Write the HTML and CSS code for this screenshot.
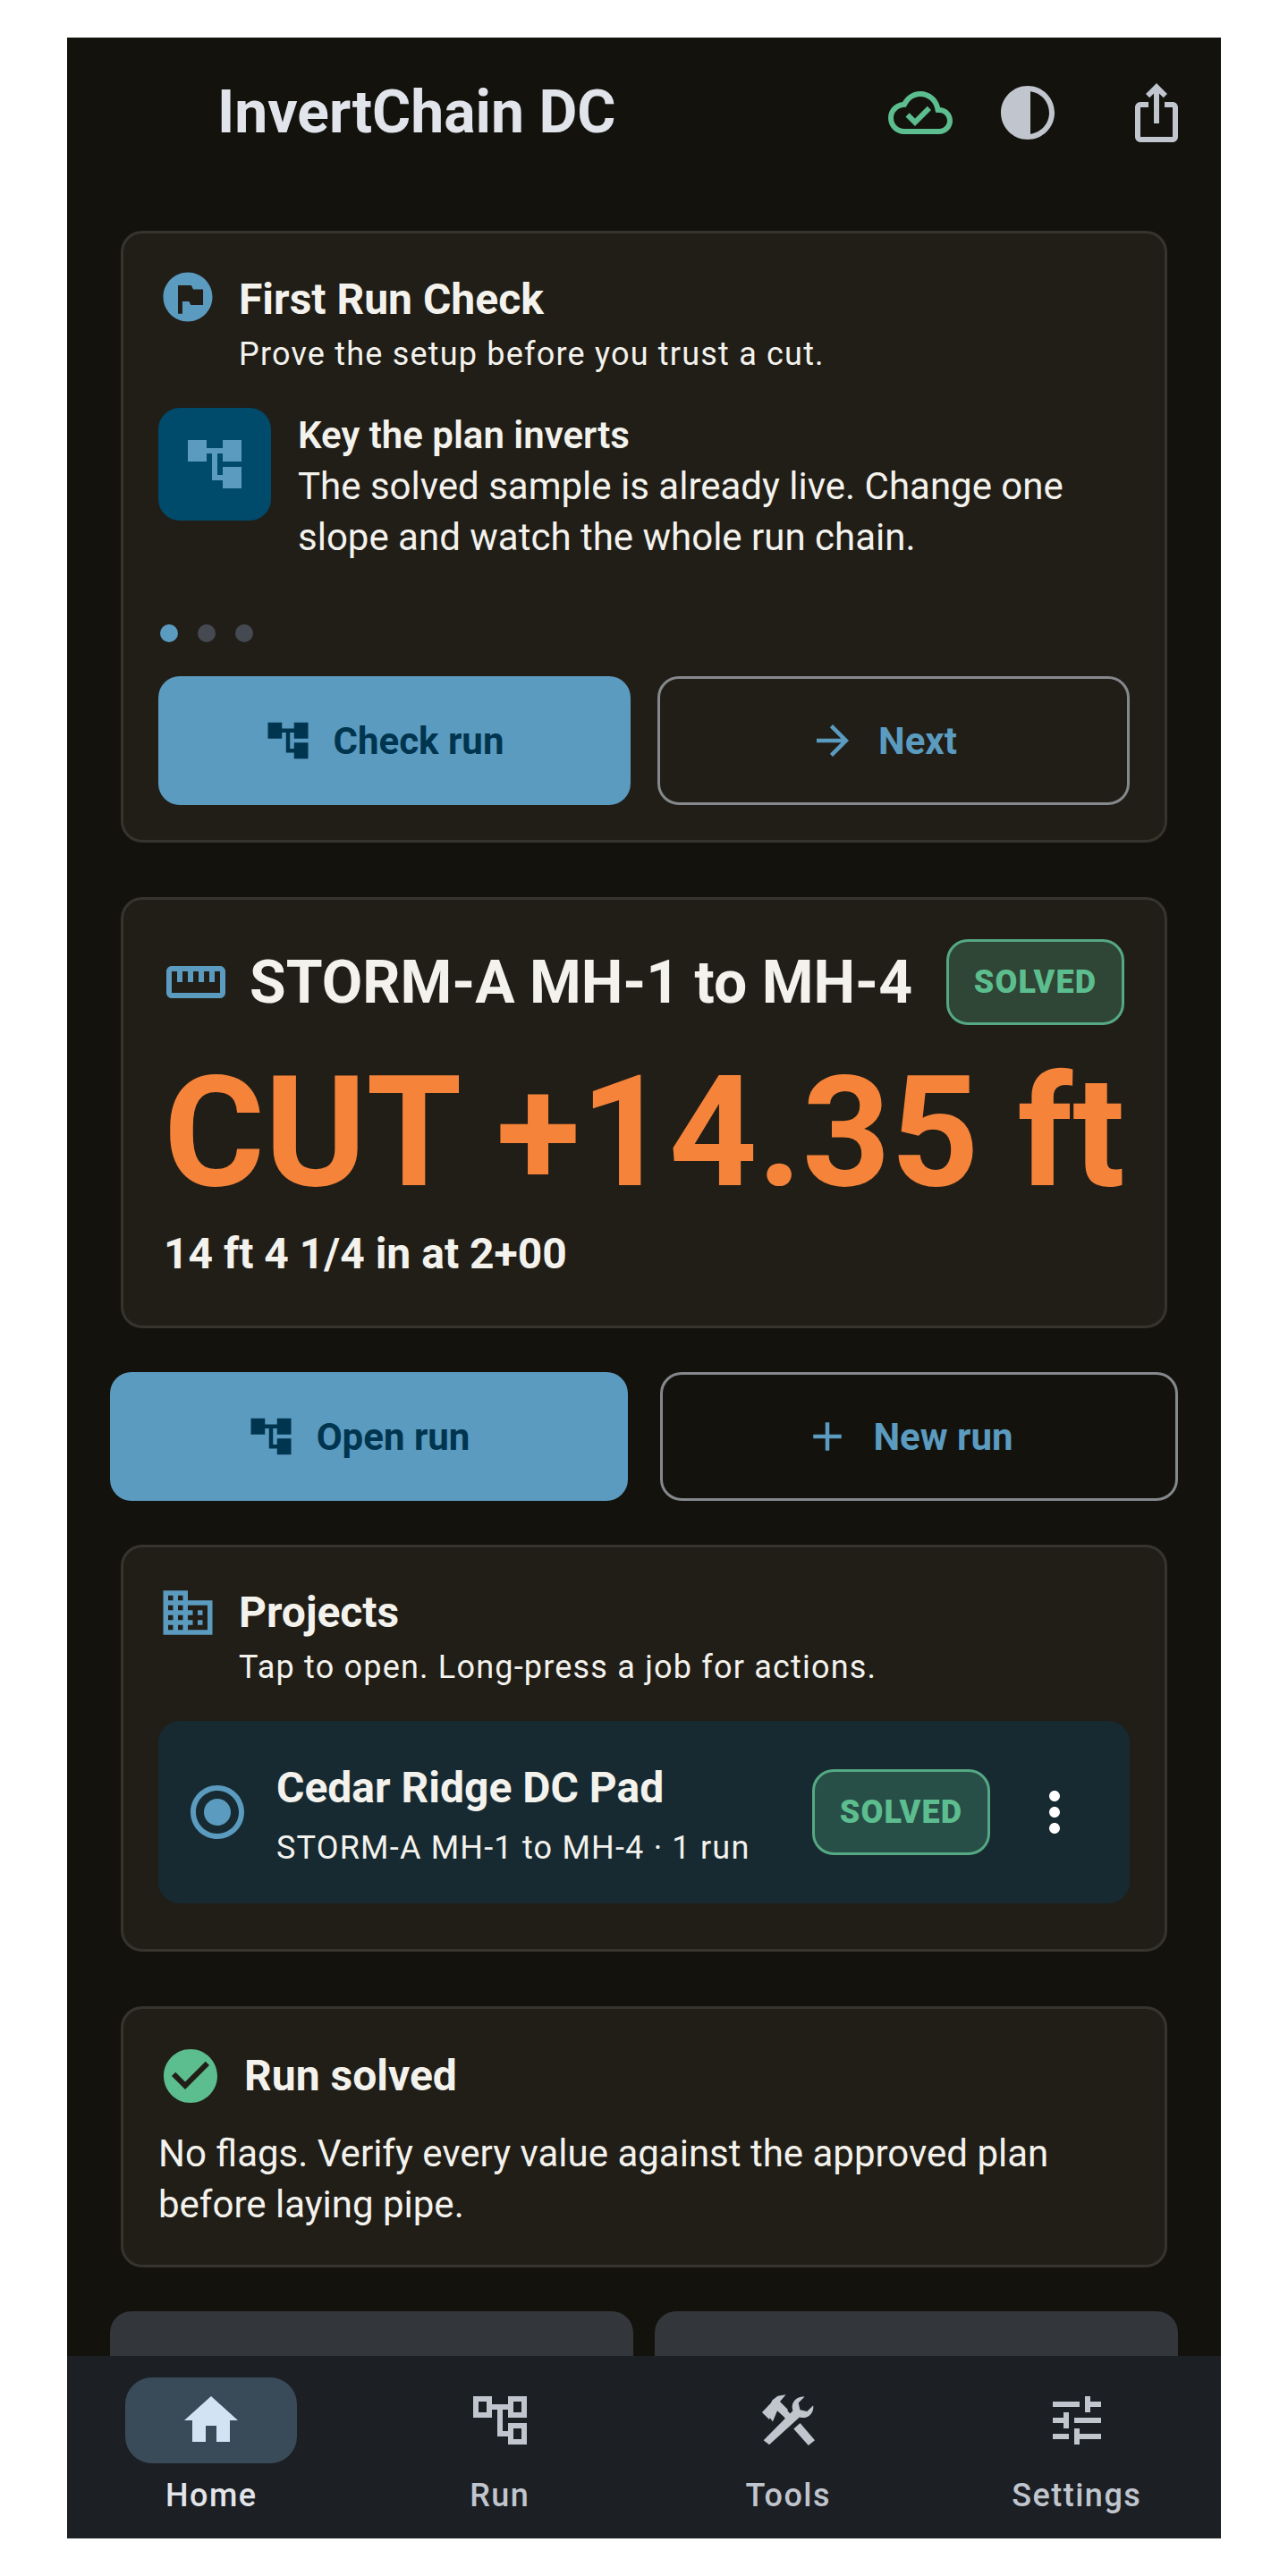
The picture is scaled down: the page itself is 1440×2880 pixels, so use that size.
FILE: index.html
```html
<!DOCTYPE html>
<html lang="en">
<head>
    <meta charset="UTF-8">
    <meta name="viewport" content="width=device-width, initial-scale=1.0">
    <title>InvertChain DC</title>
    <link rel="stylesheet" href="styles.css">
</head>
<body>
    <div class="phone">
        <header class="app-bar">
            <h1 class="app-title">InvertChain DC</h1>
            <svg class="icon i72 green" viewBox="0 0 24 24"><path d="M19.35 10.04C18.67 6.59 15.64 4 12 4 9.11 4 6.6 5.64 5.35 8.04 2.34 8.36 0 10.91 0 14c0 3.31 2.69 6 6 6h13c2.76 0 5-2.24 5-5 0-2.64-2.05-4.78-4.65-4.96zM19 18H6c-2.21 0-4-1.79-4-4 0-2.05 1.53-3.76 3.56-3.97l1.07-.11.5-.95C8.08 7.14 9.94 6 12 6c2.62 0 4.88 1.86 5.39 4.43l.3 1.5 1.53.11c1.56.1 2.78 1.41 2.78 2.96 0 1.65-1.35 3-3 3zm-9-3.82l-2.09-2.09L6.5 13.5 10 17l6.01-6.01-1.41-1.41z"/></svg>
            <svg class="icon i72 grey bar-theme" viewBox="0 0 24 24"><path d="M12 22c5.52 0 10-4.48 10-10S17.52 2 12 2 2 6.48 2 12s4.48 10 10 10zm1-17.93c3.94.49 7 3.85 7 7.93s-3.05 7.44-7 7.93V4.07z"/></svg>
            <svg class="icon i72 grey" viewBox="0 0 24 24"><path d="M16 5l-1.42 1.42-1.59-1.59V16h-1.98V4.83L9.42 6.42 8 5l4-4 4 4zm4 5v11c0 1.1-.9 2-2 2H6c-1.11 0-2-.9-2-2V10c0-1.11.89-2 2-2h3v2H6v11h12V10h-3V8h3c1.1 0 2 .89 2 2z"/></svg>
        </header>

        <main class="content">
            <section class="card card-first">
                <div class="card-head">
                    <svg class="icon i66 blue flag" viewBox="0 0 24 24"><path fill-rule="evenodd" d="M12 2C6.48 2 2 6.48 2 12s4.48 10 10 10 10-4.48 10-10S17.52 2 12 2zM8 7.3h5.4l.8 1.6h4v6.4h-5l-.7-1.5H9.8v5H8z"/></svg>
                    <div>
                        <h2 class="card-title">First Run Check</h2>
                        <p class="card-sub">Prove the setup before you trust a cut.</p>
                    </div>
                </div>
                <div class="slide">
                    <div class="slide-icon">
                        <svg class="icon i72 blue" viewBox="0 0 24 24"><path d="M22 11V3h-7v3H9V3H2v8h7V8h2v10h4v3h7v-8h-7v3h-2V8h2v3z"/></svg>
                    </div>
                    <div class="slide-text">
                        <strong>Key the plan inverts</strong><br>
                        The solved sample is already live. Change one slope and watch the whole run chain.
                    </div>
                </div>
                <div class="dots">
                    <span class="dot on"></span>
                    <span class="dot"></span>
                    <span class="dot"></span>
                </div>
                <div class="btn-row">
                    <a class="btn btn-fill">
                        <svg class="icon i54" viewBox="0 0 24 24"><path d="M22 11V3h-7v3H9V3H2v8h7V8h2v10h4v3h7v-8h-7v3h-2V8h2v3z"/></svg>
                        Check run
                    </a>
                    <a class="btn btn-line">
                        <svg class="icon i54" viewBox="0 0 24 24"><path d="M12 4l-1.41 1.41L16.17 11H4v2h12.17l-5.58 5.59L12 20l8-8z"/></svg>
                        Next
                    </a>
                </div>
            </section>

            <section class="card card-result">
                <div class="result-head">
                    <svg class="icon i72 blue" viewBox="0 0 24 24"><path d="M21 6H3c-1.1 0-2 .9-2 2v8c0 1.1.9 2 2 2h18c1.1 0 2-.9 2-2V8c0-1.1-.9-2-2-2zm0 10H3V8h2v4h2V8h2v4h2V8h2v4h2V8h2v4h2V8h2v8z"/></svg>
                    <h2 class="result-title">STORM-A MH-1 to MH-4</h2>
                    <span class="badge">SOLVED</span>
                </div>
                <div class="result-value">CUT +14.35 ft</div>
                <div class="result-note">14 ft 4 1/4 in at 2+00</div>
            </section>

            <div class="btn-row main-actions">
                <a class="btn btn-fill">
                    <svg class="icon i54" viewBox="0 0 24 24"><path d="M22 11V3h-7v3H9V3H2v8h7V8h2v10h4v3h7v-8h-7v3h-2V8h2v3z"/></svg>
                    Open run
                </a>
                <a class="btn btn-line">
                    <svg class="icon i54" viewBox="0 0 24 24"><path d="M19 13h-6v6h-2v-6H5v-2h6V5h2v6h6v2z"/></svg>
                    New run
                </a>
            </div>

            <section class="card card-projects">
                <div class="card-head">
                    <svg class="icon i66 blue" viewBox="0 0 24 24"><path d="M12 7V3H2v18h20V7H12zM6 19H4v-2h2v2zm0-4H4v-2h2v2zm0-4H4V9h2v2zm0-4H4V5h2v2zm4 12H8v-2h2v2zm0-4H8v-2h2v2zm0-4H8V9h2v2zm0-4H8V5h2v2zm10 12h-8v-2h2v-2h-2v-2h2v-2h-2V9h8v10zm-2-8h-2v2h2v-2zm0 4h-2v2h2v-2z"/></svg>
                    <div>
                        <h2 class="card-title">Projects</h2>
                        <p class="card-sub">Tap to open. Long-press a job for actions.</p>
                    </div>
                </div>
                <div class="job">
                    <svg class="icon i72 blue" viewBox="0 0 24 24"><path d="M12 7c-2.76 0-5 2.24-5 5s2.24 5 5 5 5-2.24 5-5-2.24-5-5-5zm0-5C6.48 2 2 6.48 2 12s4.48 10 10 10 10-4.48 10-10S17.52 2 12 2zm0 18c-4.42 0-8-3.58-8-8s3.58-8 8-8 8 3.58 8 8-3.58 8-8 8z"/></svg>
                    <div class="job-text">
                        <div class="job-name">Cedar Ridge DC Pad</div>
                        <div class="job-sub">STORM-A MH-1 to MH-4 · 1 run</div>
                    </div>
                    <span class="badge">SOLVED</span>
                    <svg class="icon i72 white" viewBox="0 0 24 24"><path d="M12 8c1.1 0 2-.9 2-2s-.9-2-2-2-2 .9-2 2 .9 2 2 2zm0 2c-1.1 0-2 .9-2 2s.9 2 2 2 2-.9 2-2-.9-2-2-2zm0 6c-1.1 0-2 .9-2 2s.9 2 2 2 2-.9 2-2-.9-2-2-2z"/></svg>
                </div>
            </section>

            <section class="card card-status">
                <div class="status-head">
                    <svg class="icon i72 green" viewBox="0 0 24 24"><path d="M12 2C6.48 2 2 6.48 2 12s4.48 10 10 10 10-4.48 10-10S17.52 2 12 2zm-2 15l-5-5 1.41-1.41L10 14.17l7.59-7.59L19 8l-9 9z"/></svg>
                    <h2 class="card-title">Run solved</h2>
                </div>
                <p class="status-text">No flags. Verify every value against the approved plan before laying pipe.</p>
            </section>

            <div class="tiles">
                <div class="tile"></div>
                <div class="tile"></div>
            </div>
        </main>

        <nav class="nav">
            <div class="nav-item active">
                <span class="nav-pill">
                    <svg class="icon i72" viewBox="0 0 24 24"><path d="M10 20v-6h4v6h5v-8h3L12 3 2 12h3v8z"/></svg>
                </span>
                <span class="nav-label">Home</span>
            </div>
            <div class="nav-item">
                <span class="nav-pill">
                    <svg class="icon i72" viewBox="0 0 24 24"><path d="M22 11V3h-7v3H9V3H2v8h7V8h2v10h4v3h7v-8h-7v3h-2V8h2v3h7zM7 9H4V5h3v4zm10 6h3v4h-3v-4zm0-10h3v4h-3V5z"/></svg>
                </span>
                <span class="nav-label">Run</span>
            </div>
            <div class="nav-item">
                <span class="nav-pill">
                    <svg class="icon i72" viewBox="0 0 24 24"><path d="M2.3 9l3.3-3.4.6-1.2 2-1.5 3-.5-2.2 2.6 3 3-1.8 2.4-2.2-2-1.7 4.1-1-1.4-.3.6z"/><path d="M8.6 8.4l1.7-1.7 3.8 4.3-1.8 1.9zM14.1 15.2l2.4-2.2 5.5 6.4-2.4 1.9z"/><path d="M2.9 19.4l10.9-11c-.5-1.6-.2-3 .9-4.1.9-.9 2.2-1.3 3.5-1.1l-2.3 2.3.6 2.6 2.6.6 2.3-2.3c.2 1.3-.2 2.6-1.1 3.5-1.1 1.1-2.5 1.4-4 .9L5 21.1z"/></svg>
                </span>
                <span class="nav-label">Tools</span>
            </div>
            <div class="nav-item">
                <span class="nav-pill">
                    <svg class="icon i72" viewBox="0 0 24 24"><path d="M3 17v2h6v-2H3zM3 5v2h10V5H3zm10 16v-2h8v-2h-8v-2h-2v6h2zM7 9v2H3v2h4v2h2V9H7zm14 4v-2H11v2h10zm-6-4h2V7h4V5h-4V3h-2v6z"/></svg>
                </span>
                <span class="nav-label">Settings</span>
            </div>
        </nav>
    </div>
</body>
</html>
```

FILE: styles.css
```css
* {
    box-sizing: border-box;
}
body {
    margin: 0;
    background: #fff;
    font-family: Roboto, "Liberation Sans", sans-serif;
    color: #f3f2ed;
}
h1, h2, p {
    margin: 0;
}

.phone {
    width: 1290px;
    height: 2796px;
    margin: 42px auto 0;
    background: #13120d;
    display: flex;
    flex-direction: column;
    overflow: hidden;
}

/* icons */
.icon {
    display: block;
    flex: none;
    fill: currentColor;
}
.i54 { width: 54px; height: 54px; }
.i66 { width: 66px; height: 66px; }
.i72 { width: 72px; height: 72px; }
.blue { color: #5b9bc0; }
.green { color: #5cbd8e; }
.grey { color: #c0c5ce; }
.white { color: #fff; }

/* top bar */
.app-bar {
    flex: none;
    height: 168px;
    display: flex;
    align-items: center;
    gap: 48px;
    padding: 0 36px 0 168px;
}
.app-title {
    flex: 1;
    margin-top: -2px;
    font-size: 66px;
    font-weight: 700;
    color: #e1e4ea;
}
.bar-theme {
    margin-right: 24px;
}

/* scrolling part */
.content {
    flex: 1;
    min-height: 0;
    overflow: hidden;
    padding: 48px 48px 0;
}
.card {
    margin: 0 12px;
    background: #211e17;
    border: 3px solid #36342d;
    border-radius: 24px;
}

.card-head {
    display: flex;
    gap: 24px;
}
.card-title {
    font-size: 48px;
    line-height: 66px;
    font-weight: 700;
}
.card-sub {
    margin-top: 4px;
    font-size: 36px;
    line-height: 48px;
    letter-spacing: 1.2px;
}

/* first run card */
.card-first {
    height: 684px;
    padding: 41px 39px 0;
}
.flag {
    margin-top: -3px;
}
.slide {
    display: flex;
    gap: 30px;
    margin-top: 36px;
}
.slide-icon {
    flex: none;
    width: 126px;
    height: 126px;
    border-radius: 24px;
    background: #004a6b;
    display: flex;
    align-items: center;
    justify-content: center;
}
.slide-text {
    margin-top: 2px;
    font-size: 42px;
    line-height: 57px;
}
.slide-text strong {
    font-weight: 600;
}
.dots {
    display: flex;
    gap: 22px;
    margin-top: 69px;
    margin-left: 2px;
}
.dot {
    width: 20px;
    height: 20px;
    border-radius: 50%;
    background: #454a52;
}
.dot.on {
    background: #5b9bc0;
}

/* buttons */
.btn-row {
    display: grid;
    grid-template-columns: 1fr 1fr;
    gap: 30px;
    margin-top: 38px;
}
.btn {
    height: 144px;
    display: flex;
    align-items: center;
    justify-content: center;
    gap: 24px;
    padding-right: 24px;
    border-radius: 24px;
    font-size: 42px;
    font-weight: 700;
}
.btn-fill {
    background: #5b9bc0;
    color: #00354f;
}
.btn-line {
    border: 3px solid #85888c;
    color: #5b9bc0;
}
.main-actions {
    gap: 36px;
    margin-top: 49px;
}

/* result card */
.card-result {
    height: 482px;
    margin-top: 61px;
    padding: 44px 45px 0;
}
.result-head {
    display: flex;
    align-items: center;
    gap: 24px;
}
.result-title {
    flex: 1;
    font-size: 66px;
    font-weight: 700;
}
.badge {
    flex: none;
    width: 199px;
    height: 96px;
    display: flex;
    align-items: center;
    justify-content: center;
    border: 3px solid #55a883;
    border-radius: 24px;
    background: rgba(92, 189, 142, 0.25);
    color: #5cbd8e;
    font-size: 36px;
    font-weight: 900;
    letter-spacing: 1.2px;
}
.result-value {
    margin-top: 30px;
    font-size: 172.5px;
    line-height: 180px;
    font-weight: 700;
    color: #f5843a;
    white-space: nowrap;
}
.result-note {
    margin-top: 13px;
    font-size: 48px;
    line-height: 66px;
    font-weight: 700;
}

/* projects */
.card-projects {
    height: 455px;
    margin-top: 49px;
    padding: 40px 39px 0;
}
.job {
    height: 204px;
    margin-top: 36px;
    padding: 0 48px 0 30px;
    display: flex;
    align-items: center;
    background: #172a31;
    border-radius: 24px;
}
.job-text {
    flex: 1;
    margin: 3px 0 0 30px;
}
.job-name {
    font-size: 48px;
    line-height: 66px;
    font-weight: 700;
}
.job-sub {
    margin-top: 10px;
    font-size: 36px;
    line-height: 48px;
    letter-spacing: 1.2px;
}
.job .badge {
    margin-right: 36px;
}

/* solved message */
.card-status {
    height: 292px;
    margin-top: 61px;
    padding: 39px 39px 0;
}
.status-head {
    display: flex;
    align-items: center;
    gap: 24px;
}
.status-text {
    margin-top: 22px;
    font-size: 42px;
    line-height: 57px;
}

/* tiles cut off by the nav */
.tiles {
    display: flex;
    gap: 24px;
    margin-top: 49px;
}
.tile {
    flex: 1;
    height: 300px;
    background: #33363b;
    border-radius: 24px;
}

/* bottom nav */
.nav {
    flex: none;
    height: 204px;
    display: flex;
    background: #1c1f24;
}
.nav-item {
    flex: 1;
    display: flex;
    flex-direction: column;
    align-items: center;
    padding-top: 24px;
    color: #c0c5ce;
}
.nav-pill {
    width: 192px;
    height: 96px;
    border-radius: 30px;
    display: flex;
    align-items: center;
    justify-content: center;
}
.nav-label {
    margin-top: 12px;
    font-size: 36px;
    line-height: 48px;
    font-weight: 500;
    letter-spacing: 1.5px;
}
.nav-item.active .nav-pill {
    background: #394b58;
    color: #d2e4f4;
}
.nav-item.active .nav-label {
    color: #e1e4ea;
}
```
